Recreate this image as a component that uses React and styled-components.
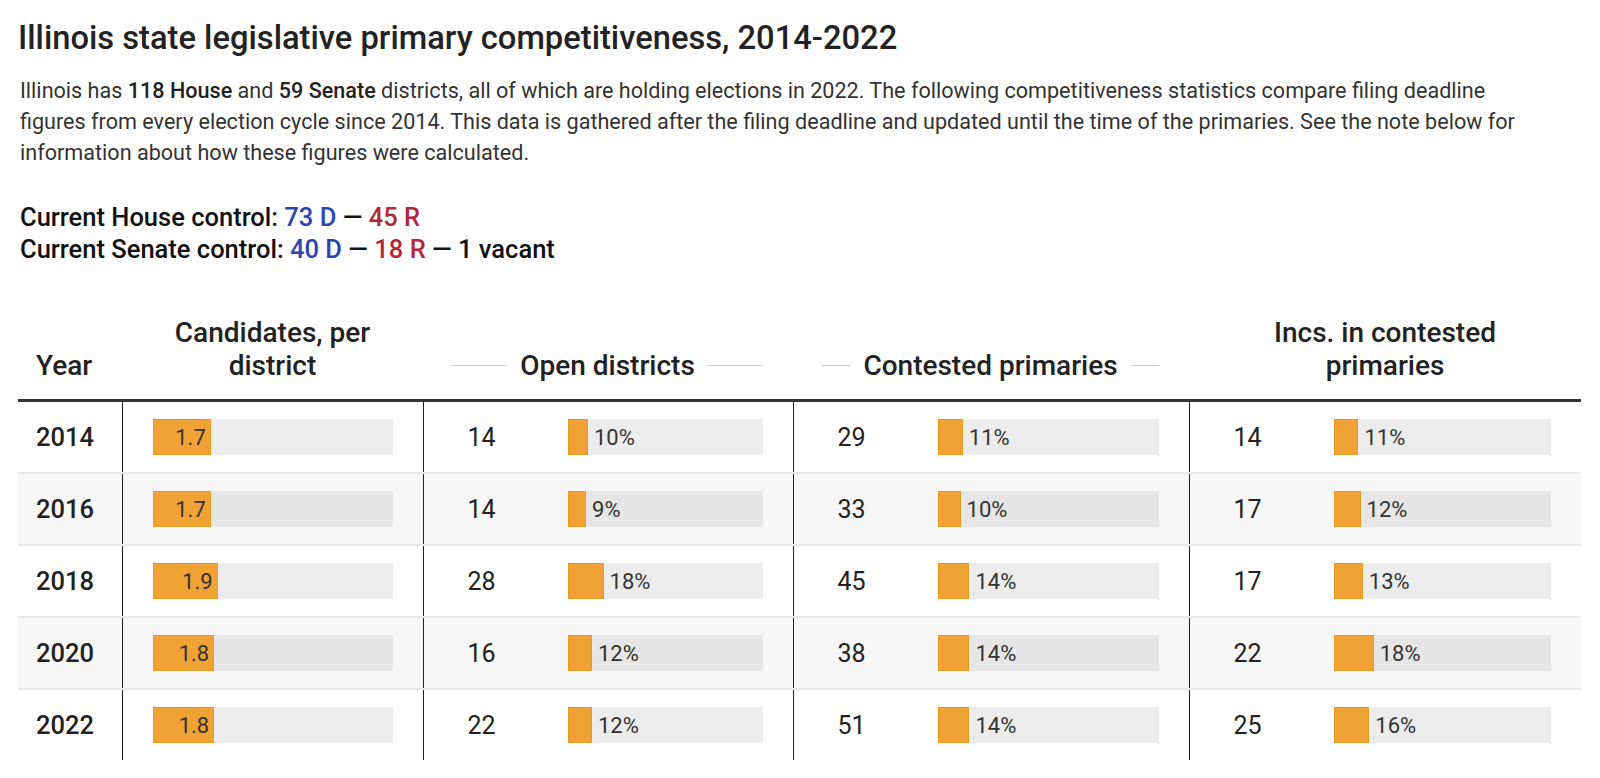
import styled, { createGlobalStyle } from 'styled-components';

const GlobalStyle = createGlobalStyle`
  body {
    margin: 0;
    background: #fff;
    font-family: Roboto, "Noto Sans", "Liberation Sans", sans-serif;
    color: #333;
  }
`;

const Page = styled.div`
  padding: 19px 19px 0 18px;
`;

const Title = styled.h1`
  margin: 0;
  font-size: 32.7px;
  line-height: 38px;
  font-weight: 500;
  color: #222;
`;

const Intro = styled.p`
  margin: 18px 0 0 2px;
  font-size: 21.6px;
  line-height: 31px;
  color: #333;

  b {
    font-weight: 500;
    color: #222;
  }
`;

const Control = styled.div`
  margin: 33px 0 0 2px;
  font-size: 25.5px;
  line-height: 32px;
  font-weight: 500;
  color: #111;
`;

const Party = styled.span`
  color: ${(p) => (p.$side === 'D' ? '#2a46b1' : '#b0283a')};
`;

const Table = styled.table`
  margin-top: 51px;
  width: 1563px;
  border-collapse: collapse;
  table-layout: fixed;
`;

const HeadCell = styled.th`
  padding: 0 0 17px ${(p) => (p.$left ? '18px' : '0')};
  vertical-align: bottom;
  text-align: ${(p) => (p.$left ? 'left' : 'center')};
  font-size: 28px;
  line-height: 33px;
  font-weight: 500;
  color: #222;
  border-bottom: 3px solid #333;
`;

const Spanned = styled.div`
  display: flex;
  align-items: center;
  gap: 13px;
  padding: 0 30px 0 29px;

  &::before,
  &::after {
    content: '';
    flex: 1;
    height: 1px;
    background: #c8c8c8;
  }
`;

const Row = styled.tr`
  background: ${(p) => (p.$striped ? '#f7f7f7' : '#fff')};
  border-bottom: ${(p) => (p.$last ? 'none' : '2px solid #e8e8e8')};
`;

const YearCell = styled.td`
  height: 70px;
  padding: 0 0 0 18px;
  font-size: 25.5px;
  font-weight: 500;
  color: #222;
`;

const Cell = styled.td`
  height: 70px;
  padding: 0 30px 0 ${(p) => (p.$wide ? '44px' : '30px')};
  border-left: 1px solid #222;
`;

const CellInner = styled.div`
  display: flex;
  align-items: center;
`;

const Count = styled.div`
  width: 100px;
  flex: none;
  font-size: 25px;
  color: #222;
`;

const Track = styled.div`
  flex: 1;
  height: 36px;
  display: flex;
  align-items: center;
  background: ${(p) => (p.$striped ? '#e6e6e6' : '#ececec')};
`;

const Fill = styled.div`
  height: 100%;
  flex: none;
  background: #f1a235;
  box-shadow: inset 0 0 0 1px #eb9a20;
  display: flex;
  align-items: center;
  justify-content: flex-end;
  box-sizing: border-box;
`;

const Label = styled.span`
  font-size: 22px;
  color: #333;
  padding: ${(p) => (p.$inside ? '0 5px 0 0' : '0 0 0 6px')};
`;

const rows = [
  { year: 2014, cand: 1.7, open: [14, 10], contested: [29, 11], incs: [14, 11] },
  { year: 2016, cand: 1.7, open: [14, 9], contested: [33, 10], incs: [17, 12] },
  { year: 2018, cand: 1.9, open: [28, 18], contested: [45, 14], incs: [17, 13] },
  { year: 2020, cand: 1.8, open: [16, 12], contested: [38, 14], incs: [22, 18] },
  { year: 2022, cand: 1.8, open: [22, 12], contested: [51, 14], incs: [25, 16] },
];

const PercentCell = ({ value, striped }) => (
  <Cell $wide>
    <CellInner>
      <Count>{value[0]}</Count>
      <Track $striped={striped}>
        <Fill style={{ width: `calc(${value[1]}% + 1px)` }} />
        <Label>{value[1]}%</Label>
      </Track>
    </CellInner>
  </Cell>
);

const App = () => {
  return (
    <Page>
      <GlobalStyle />
      <Title>Illinois state legislative primary competitiveness, 2014-2022</Title>
      <Intro>
        Illinois has <b>118 House</b> and <b>59 Senate</b> districts, all of which are holding
        elections in 2022. The following competitiveness statistics compare filing deadline
        <br />
        figures from every election cycle since 2014. This data is gathered after the filing
        deadline and updated until the time of the primaries. See the note below for
        <br />
        information about how these figures were calculated.
      </Intro>
      <Control>
        <div>
          Current House control: <Party $side='D'>73 D</Party> — <Party $side='R'>45 R</Party>
        </div>
        <div>
          Current Senate control: <Party $side='D'>40 D</Party> — <Party $side='R'>18 R</Party> — 1
          vacant
        </div>
      </Control>

      <Table>
        <colgroup>
          <col style={{ width: 104 }} />
          <col style={{ width: 301 }} />
          <col style={{ width: 370 }} />
          <col style={{ width: 396 }} />
          <col style={{ width: 392 }} />
        </colgroup>
        <thead>
          <tr>
            <HeadCell $left>Year</HeadCell>
            <HeadCell>
              Candidates, per
              <br />
              district
            </HeadCell>
            <HeadCell>
              <Spanned>Open districts</Spanned>
            </HeadCell>
            <HeadCell>
              <Spanned>Contested primaries</Spanned>
            </HeadCell>
            <HeadCell>
              Incs. in contested
              <br />
              primaries
            </HeadCell>
          </tr>
        </thead>
        <tbody>
          {rows.map((row, i) => {
            const striped = i % 2 === 1;
            return (
              <Row key={row.year} $striped={striped} $last={i === rows.length - 1}>
                <YearCell>{row.year}</YearCell>
                <Cell>
                  <Track $striped={striped}>
                    <Fill style={{ width: `${(row.cand / 7) * 100}%` }}>
                      <Label $inside>{row.cand}</Label>
                    </Fill>
                  </Track>
                </Cell>
                <PercentCell value={row.open} striped={striped} />
                <PercentCell value={row.contested} striped={striped} />
                <PercentCell value={row.incs} striped={striped} />
              </Row>
            );
          })}
        </tbody>
      </Table>
    </Page>
  );
};

export default App;
